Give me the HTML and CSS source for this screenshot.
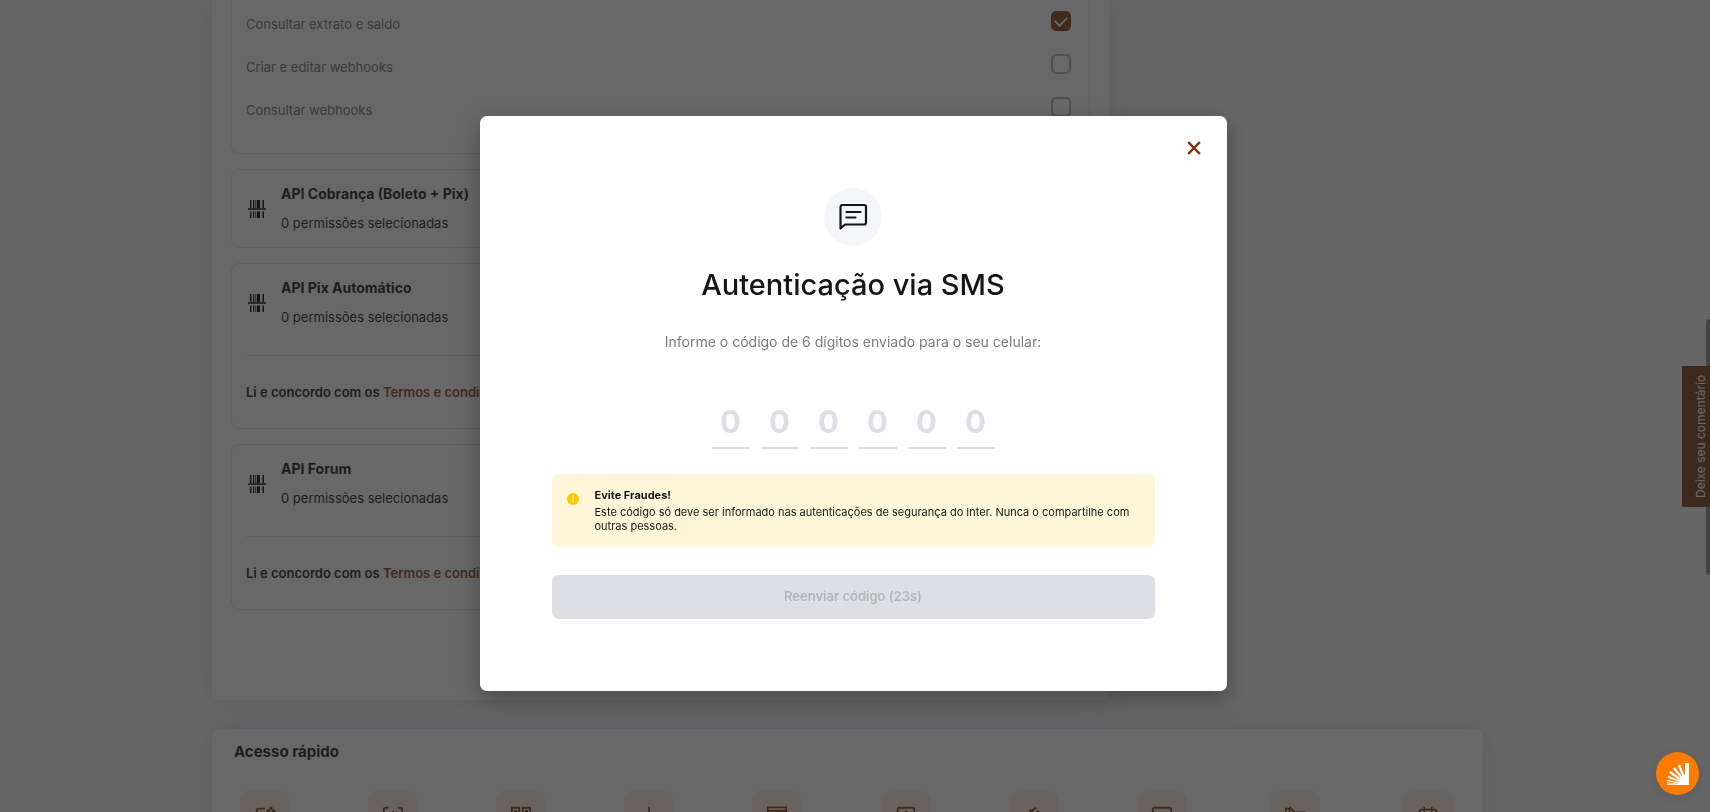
FILE: index.html
```html
<!DOCTYPE html>
<html lang="pt-BR">
<head>
<meta charset="utf-8">
<title>Autenticação via SMS</title>
<link rel="stylesheet" href="styles.css">
</head>
<body>
<svg class="sprite" aria-hidden="true">
  <symbol id="barcode" viewBox="0 0 18 18">
    <path d="M0 8.200h18v1.500H0zM2 0h1.400v8H2zM5 0h1.200v8H5zM8.800 0h3.200v8H8.800zM7 0h.6v8H7zM14.500 0H16v8h-1.500zM2 11.500h1.400V18H2zM5 11.500h1.200V18H5zM7 11.500h.6V18H7zM8.800 11.500h3.200V18H8.800zM14.500 11.500H16V18h-1.500z"/>
  </symbol>
</svg>
<main class="page">
  <section class="card permissions">
    <div class="panel panel-open">
      <div class="row"><label for="p1">Consultar extrato e saldo</label><input type="checkbox" id="p1" checked></div>
      <div class="row"><label for="p2">Criar e editar webhooks</label><input type="checkbox" id="p2"></div>
      <div class="row"><label for="p3">Consultar webhooks</label><input type="checkbox" id="p3"></div>
    </div>
    <div class="panel">
      <div class="panel-head">
        <svg class="panel-icon"><use href="#barcode"/></svg>
        <div class="panel-text"><h3>API Cobrança (Boleto + Pix)</h3><p>0 permissões selecionadas</p></div>
      </div>
    </div>
    <div class="panel">
      <div class="panel-head">
        <svg class="panel-icon"><use href="#barcode"/></svg>
        <div class="panel-text"><h3>API Pix Automático</h3><p>0 permissões selecionadas</p></div>
      </div>
      <p class="terms">Li e concordo com os <a href="#termos">Termos e condições</a></p>
    </div>
    <div class="panel">
      <div class="panel-head">
        <svg class="panel-icon"><use href="#barcode"/></svg>
        <div class="panel-text"><h3>API Forum</h3><p>0 permissões selecionadas</p></div>
      </div>
      <p class="terms">Li e concordo com os <a href="#termos">Termos e condições</a></p>
    </div>
  </section>
  <section class="card quick">
    <h2>Acesso rápido</h2>
    <div class="tiles">
      <a class="tile" href="#a1" aria-label="Pix"><svg viewBox="0 0 24 24"><path d="M12 4H5a2 2 0 0 0-2 2v13a2 2 0 0 0 2 2h14v-8M7 8h2M11 8h1"/><path class="solid" d="M18.500 1l2.500 2.500L18.500 6 16 3.500zM15.500 4l2.500 2.500L15.500 9 13 6.500zM21.500 4L24 6.500 21.500 9 19 6.500z"/></svg></a>
      <a class="tile" href="#a2" aria-label="Pagar"><svg viewBox="0 0 24 24"><path d="M2 8V5a2 2 0 0 1 2-2h3M17 3h3a2 2 0 0 1 2 2v3M2 16v3a2 2 0 0 0 2 2h3M17 21h3a2 2 0 0 0 2-2v-3M12 6.500v11"/></svg></a>
      <a class="tile" href="#a3" aria-label="QR Code"><svg viewBox="0 0 24 24"><path d="M2 3h8v8H2zM14 3h8v8h-8zM2 14h8v7H2zM14 14h8v7h-8zM5.500 6.500h1v1h-1zM17.500 6.500h1v1h-1z"/></svg></a>
      <a class="tile" href="#a4" aria-label="Depositar"><svg viewBox="0 0 24 24"><path d="M12 2v13M7 11l5 5 5-5M4 21h16"/></svg></a>
      <a class="tile" href="#a5" aria-label="Extrato"><svg viewBox="0 0 24 24"><path d="M2 2.500h20v4H2zM6 7v14h12V7M9 11h6"/></svg></a>
      <a class="tile" href="#a6" aria-label="Cobrança"><svg viewBox="0 0 24 24"><path d="M4 3h16a1 1 0 0 1 1 1v17H3V4a1 1 0 0 1 1-1zM12 6.500V16M9 9.500L12 7l3 2.500"/></svg></a>
      <a class="tile" href="#a7" aria-label="Transferir"><svg viewBox="0 0 24 24"><path d="M3 14l8-8M8 9V6h3M10 6l4-3M11 12l5-5 4 3"/></svg></a>
      <a class="tile" href="#a8" aria-label="Recarga"><svg viewBox="0 0 24 24"><path d="M4 3h16a2 2 0 0 1 2 2v13H2V5a2 2 0 0 1 2-2z"/></svg></a>
      <a class="tile" href="#a9" aria-label="Arquivos"><svg viewBox="0 0 24 24"><path d="M2 21V4h4v17M6 2l6 6h10v13H6"/></svg></a>
      <a class="tile" href="#a10" aria-label="Agenda"><svg viewBox="0 0 24 24"><path d="M5 5h14a2 2 0 0 1 2 2v14H3V7a2 2 0 0 1 2-2zM8 2v7M16 2v7M3 9h18"/></svg></a>
    </div>
  </section>
</main>
<div class="scroll-thumb"></div>
<button class="feedback" type="button">Deixe seu comentário</button>
<div class="overlay">
  <div class="modal" role="dialog" aria-modal="true" aria-labelledby="modal-title">
    <button class="close" type="button" aria-label="Fechar"><svg viewBox="0 0 14 14"><path d="M1.200 1.200l11.600 11.600M12.800 1.200L1.200 12.800"/></svg></button>
    <div class="badge"><svg viewBox="0 0 30 30"><path d="M2.500 26.500V5a2 2 0 0 1 2-2h21.500a2 2 0 0 1 2 2v15.500a2 2 0 0 1-2 2H7L2.500 26.500zM8.500 10h14M8.500 15.500h9"/></svg></div>
    <h1 id="modal-title">Autenticação via SMS</h1>
    <p class="lead">Informe o código de 6 dígitos enviado para o seu celular:</p>
    <div class="code">
      <input type="text" placeholder="0" maxlength="1" aria-label="Dígito 1">
      <input type="text" placeholder="0" maxlength="1" aria-label="Dígito 2">
      <input type="text" placeholder="0" maxlength="1" aria-label="Dígito 3">
      <input type="text" placeholder="0" maxlength="1" aria-label="Dígito 4">
      <input type="text" placeholder="0" maxlength="1" aria-label="Dígito 5">
      <input type="text" placeholder="0" maxlength="1" aria-label="Dígito 6">
    </div>
    <div class="alert">
      <svg viewBox="0 0 12 12"><circle cx="6" cy="6" r="6"/><path d="M6 2.600v4.600M6 8.200v1.200"/></svg>
      <div><strong>Evite Fraudes!</strong><p>Este código só deve ser informado nas autenticações de segurança do Inter. Nunca o compartilhe com outras pessoas.</p></div>
    </div>
    <button class="resend" type="button" disabled>Reenviar código (23s)</button>
  </div>
</div>
<button class="fab" type="button" aria-label="Ajuda">
  <svg viewBox="0 0 22 22"><path d="M18 0h4v22H10.500L16 14l2-3zM10.700 2.600l2.600-1.200L17.500 13l-1 3zM5.800 5.800l2-1.600L16.500 15l-1 2zM2.200 10l1.400-1.900L16 17l-1 2zM.5 14.600l.8-1.800L15 18.500l-.5 1.500zM0 18l.3-1.300L14 20l-.2 1zM0 20.200V19.300L13 21v.5zM0 22v-.7h12V22z"/></svg>
</button>
</body>
</html>
```
FILE: styles.css
```css
* { box-sizing: border-box; }

body {
  margin: 0;
  background: #f8f8f8;
  color: #161616;
  font-family: Inter, "Liberation Sans", sans-serif;
  font-size: 13px;
  line-height: 20px;
}

h1, h2, h3, p { margin: 0; }
button { font-family: inherit; border: 0; padding: 0; }
.sprite { display: none; }

.page {
  height: 100vh;
  overflow: hidden;
  padding: 0 227px 0 212px;
  display: flex;
  flex-direction: column;
  gap: 29px;
}

.card {
  flex: none;
  background: #fff;
  border-radius: 8px;
  box-shadow: 0 0 24px rgba(120, 130, 180, 0.24);
}

.permissions {
  width: 897px;
  padding: 0 19px 90px;
  border-radius: 0 0 8px 8px;
  display: flex;
  flex-direction: column;
  gap: 15px;
}

.panel {
  border: 1px solid #e4e5ea;
  border-radius: 8px;
  padding: 14px;
}

.panel-open {
  border-top: 0;
  border-radius: 0 0 8px 8px;
  padding: 0 18px 24px 14px;
}

.row {
  height: 43px;
  padding-top: 11px;
  display: flex;
  justify-content: space-between;
  color: #6f7075;
}

.row label { padding-top: 3px; }

.row input {
  appearance: none;
  width: 20px;
  height: 20px;
  margin: 0;
  border: 2px solid #b4b5ba;
  border-radius: 5px;
}

.row input:checked {
  border: 0;
  background: #8a3c10;
  display: grid;
  place-items: center;
}

.row input:checked::after {
  content: "";
  width: 10px;
  height: 6px;
  margin-bottom: 3px;
  border: solid #fff;
  border-width: 0 0 2px 2px;
  transform: rotate(-45deg);
}

.panel-head {
  display: flex;
  align-items: center;
  gap: 15px;
}

.panel-icon { width: 18px; height: 18px; margin-left: 2px; fill: #000; }
.panel-text { display: grid; gap: 9px; }
.panel h3 { font-size: 14px; line-height: 20px; font-weight: 700; }

.terms {
  margin-top: 28px;
  padding: 26px 0 12px;
  border-top: 1px solid #dedfe4;
  font-weight: 600;
}

.terms a { color: #8a3c10; text-decoration: none; }

.quick { padding: 13px 30px 40px 22px; }
.quick h2 { font-size: 15px; line-height: 20px; font-weight: 700; }

.tiles {
  margin: 29px 0 0 6px;
  display: grid;
  grid-template-columns: repeat(7, 128fr) 133fr 133fr 50px;
}

.tile {
  width: 50px;
  height: 50px;
  border-radius: 10px;
  background: #ffeee2;
  display: grid;
  justify-content: center;
  padding-top: 14px;
}

.tile svg {
  width: 22px;
  height: 22px;
  fill: none;
  stroke: #8a3c10;
  stroke-width: 2;
}

.tile .solid { fill: #8a3c10; stroke: none; }

.scroll-thumb {
  position: fixed;
  right: 0;
  top: 319px;
  width: 4px;
  height: 256px;
  border-radius: 4px 0 0 4px;
  background: #8b8b8b;
}

.feedback {
  position: fixed;
  right: 0;
  top: 366px;
  width: 28px;
  height: 141px;
  padding-right: 9px;
  border-radius: 0 2px 0 0;
  background: #7a3917;
  color: #fff;
  font-size: 12px;
  line-height: 20px;
  writing-mode: vertical-rl;
  transform: rotate(180deg);
}

.overlay {
  position: fixed;
  inset: 0;
  padding: 0 4px 5px 0;
  background: rgba(32, 32, 32, 0.68);
  display: flex;
  align-items: center;
  justify-content: center;
}

.modal {
  position: relative;
  width: 747px;
  padding: 72px;
  border-radius: 7px;
  background: #fff;
  box-shadow: 0 8px 24px rgba(0, 0, 0, 0.3);
  display: flex;
  flex-direction: column;
  align-items: center;
}

.close {
  position: absolute;
  top: 25px;
  right: 26px;
  width: 14px;
  height: 14px;
  background: none;
}

.close svg { display: block; fill: none; stroke: #7a3917; stroke-width: 2.4; }

.badge {
  width: 58px;
  height: 58px;
  border-radius: 50%;
  background: #f5f6fa;
  display: grid;
  place-items: center;
}

.badge svg {
  width: 30px;
  height: 30px;
  fill: none;
  stroke: #161616;
  stroke-width: 2.2;
  stroke-linecap: round;
  stroke-linejoin: round;
}

h1 {
  margin-top: 21px;
  font-size: 29px;
  line-height: 36px;
  font-weight: 500;
}

.lead {
  margin-top: 29px;
  font-size: 14px;
  line-height: 20px;
  color: #7a7b80;
}

.code {
  margin-top: 44px;
  display: flex;
  gap: 11px;
}

.code input {
  width: 38px;
  height: 53px;
  padding: 0;
  border: 0;
  border-bottom: 2px solid #dedfe4;
  background: none;
  font: 700 31px/40px Inter, sans-serif;
  text-align: center;
  outline: 0;
}

.code input::placeholder { color: #dedfe4; opacity: 1; }

.alert {
  align-self: stretch;
  margin-top: 25px;
  padding: 14px 20px 14px 15px;
  border-radius: 7px;
  background: #fff6d9;
  display: flex;
  gap: 16px;
  font-size: 11px;
  line-height: 14px;
}

.alert svg { flex: none; width: 12px; height: 12px; margin-top: 5px; fill: #ffc700; }
.alert path { stroke: #fff6d9; stroke-width: 1.2; }
.alert strong { display: block; }
.alert p { margin-top: 3px; }

.resend {
  align-self: stretch;
  height: 44px;
  margin-top: 28px;
  padding-bottom: 2px;
  border-radius: 7px;
  background: #dedfe4;
  color: #b4b5b8;
  font-size: 13px;
  font-weight: 600;
}

.fab {
  position: fixed;
  right: 11px;
  bottom: 17px;
  width: 43px;
  height: 43px;
  border-radius: 50%;
  background: #ff7a00;
  box-shadow: 0 2px 16px rgba(0, 0, 0, 0.1);
  display: grid;
  place-items: center;
}

.fab svg { width: 22px; height: 22px; fill: #fff; }
```
